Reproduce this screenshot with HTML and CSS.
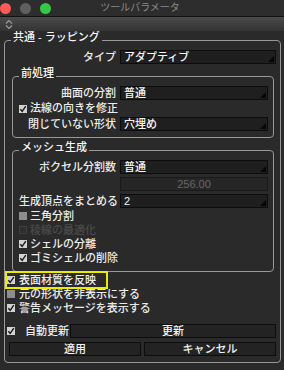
FILE: index.html
```html
<!DOCTYPE html>
<html lang="ja">
<head>
<meta charset="utf-8">
<title>ツールパラメータ</title>
<link rel="stylesheet" href="styles.css">
</head>
<body>
<div class="titlebar">
  <div class="lights"><span class="light red"></span><span class="light gray"></span><span class="light green"></span></div>
  <div class="title">ツールパラメータ</div>
  <div></div>
</div>
<div class="toolbar">
  <svg width="8" height="11" viewBox="0 0 8 11"><path d="M1 4.5 L4 1.5 L7 4.5 M1 6.5 L4 9.5 L7 6.5" fill="none" stroke="#9a9a9a" stroke-width="1.2"/></svg>
</div>
<fieldset class="group outer">
  <legend>共通 - ラッピング</legend>
  <div class="frow"><span class="lbl">タイプ</span><div class="select"><span>アダプティブ</span><svg class="tri" width="6" height="6" viewBox="0 0 6 6"><path d="M6 0 V6 H0 Z" fill="#060606"/></svg></div></div>

  <fieldset class="group inner pre">
    <legend>前処理</legend>
    <div class="frow"><span class="lbl">曲面の分割</span><div class="select"><span>普通</span><svg class="tri" width="6" height="6" viewBox="0 0 6 6"><path d="M6 0 V6 H0 Z" fill="#060606"/></svg></div></div>
    <div class="crow tall"><span class="cb on"><svg width="8" height="8" viewBox="0 0 8 8"><path d="M1.3 4.2 L3.2 6.3 L6.8 1.2" fill="none" stroke="#1a1a1a" stroke-width="1.4"/></svg></span><span>法線の向きを修正</span></div>
    <div class="frow"><span class="lbl">閉じていない形状</span><div class="select"><span>穴埋め</span><svg class="tri" width="6" height="6" viewBox="0 0 6 6"><path d="M6 0 V6 H0 Z" fill="#060606"/></svg></div></div>
  </fieldset>

  <fieldset class="group inner mesh">
    <legend>メッシュ生成</legend>
    <div class="frow"><span class="lbl">ボクセル分割数</span><div class="select"><span>普通</span><svg class="tri" width="6" height="6" viewBox="0 0 6 6"><path d="M6 0 V6 H0 Z" fill="#060606"/></svg></div></div>
    <div class="frow gap3"><span class="lbl"></span><div class="field">256.00</div></div>
    <div class="frow gap3"><span class="lbl">生成頂点をまとめる</span><div class="select"><span>2</span><svg class="tri" width="6" height="6" viewBox="0 0 6 6"><path d="M6 0 V6 H0 Z" fill="#060606"/></svg></div></div>
    <div class="checks">
      <div class="crow"><span class="cb off"></span><span>三角分割</span></div>
      <div class="crow dis"><span class="cb disabled"></span><span>稜線の最適化</span></div>
      <div class="crow"><span class="cb on"><svg width="8" height="8" viewBox="0 0 8 8"><path d="M1.3 4.2 L3.2 6.3 L6.8 1.2" fill="none" stroke="#1a1a1a" stroke-width="1.4"/></svg></span><span>シェルの分離</span></div>
      <div class="crow"><span class="cb on"><svg width="8" height="8" viewBox="0 0 8 8"><path d="M1.3 4.2 L3.2 6.3 L6.8 1.2" fill="none" stroke="#1a1a1a" stroke-width="1.4"/></svg></span><span>ゴミシェルの削除</span></div>
    </div>
  </fieldset>

  <div class="toplist">
    <div class="crow top hl"><span class="cb on"><svg width="8" height="8" viewBox="0 0 8 8"><path d="M1.3 4.2 L3.2 6.3 L6.8 1.2" fill="none" stroke="#1a1a1a" stroke-width="1.4"/></svg></span><span>表面材質を反映</span></div>
    <div class="crow top"><span class="cb off"></span><span>元の形状を非表示にする</span></div>
    <div class="crow top"><span class="cb on"><svg width="8" height="8" viewBox="0 0 8 8"><path d="M1.3 4.2 L3.2 6.3 L6.8 1.2" fill="none" stroke="#1a1a1a" stroke-width="1.4"/></svg></span><span>警告メッセージを表示する</span></div>
  </div>

  <div class="autorow">
    <span class="cb on"><svg width="8" height="8" viewBox="0 0 8 8"><path d="M1.3 4.2 L3.2 6.3 L6.8 1.2" fill="none" stroke="#1a1a1a" stroke-width="1.4"/></svg></span>
    <span class="autolbl">自動更新</span>
    <div class="btn">更新</div>
  </div>
  <div class="btnrow">
    <div class="btn">適用</div>
    <div class="btn">キャンセル</div>
  </div>
</fieldset>
</body>
</html>
```

FILE: styles.css
```css
* { box-sizing: border-box; }
html, body { margin: 0; padding: 0; }
body {
  width: 284px;
  height: 370px;
  overflow: hidden;
  background: #2a2a2a;
  font-family: "Liberation Sans", "Noto Sans CJK JP", sans-serif;
  font-size: 11px;
  font-weight: 500;
  color: #ececec;
}

.titlebar {
  height: 17px;
  display: grid;
  grid-template-columns: 1fr auto 1fr;
  align-items: center;
  background: #2d2d2d;
  border-bottom: 1px solid #111;
}
.lights { display: flex; gap: 9px; }
.light { width: 11px; height: 11px; border-radius: 50%; }
.red { background: #fc5b57; }
.gray { background: #5f5f5f; }
.green { background: #34c748; }
.title {
  font-size: 10px;
  font-weight: 400;
  line-height: 12px;
  color: #8a8a8a;
  margin-right: 4px;
}

.toolbar {
  height: 14px;
  background: linear-gradient(#4b4b4b, #333333);
  display: flex;
  align-items: center;
  padding-left: 5px;
}

.group {
  border: 1px solid #989898;
  border-radius: 4px;
  min-width: 0;
}
.group > legend {
  padding: 0 2px 6px;
  line-height: 13px;
  color: #f6f6f6;
}
.outer {
  margin: 0 0 0 4px;
  width: 277px;
  padding: 0 4px 6px 2px;
}
.outer > legend { margin-left: 4px; }
.inner {
  margin: 3px 2px 0 5px;
  padding: 0 5px 6px 6px;
}
.inner > legend { margin-left: 0; }

.frow {
  display: flex;
  align-items: center;
  gap: 4px;
  height: 14px;
}
.frow.gap3 { margin-top: 3px; }
.lbl {
  flex: none;
  width: 109px;
  text-align: right;
  line-height: 13px;
  white-space: nowrap;
}
.inner .lbl { width: 97px; }

.select, .field {
  flex: 1;
  height: 14px;
  border: 1px solid #0c0c0c;
  background: #1f1f1f;
  line-height: 12px;
}
.select {
  display: flex;
  justify-content: space-between;
  padding: 0 1px 1px 3px;
  color: #f6f6f6;
}
.select .tri { align-self: flex-end; }
.field {
  text-align: center;
  color: #676767;
  font-weight: 400;
  background: #262626;
  border-color: #191919;
}

.crow {
  display: flex;
  align-items: center;
  gap: 3px;
  height: 14px;
  line-height: 13px;
  white-space: nowrap;
}
.crow.tall { height: 15px; margin: 1px 0; }
.checks { margin-top: 1px; }
.crow.dis { color: #4a4a4a; }

.cb {
  flex: none;
  width: 8px;
  height: 8px;
  display: flex;
}
.cb.on { background: #d2d2d2; }
.cb.off { background: #8d8d8d; }
.cb.disabled { background: #2e2e2e; border: 1px solid #3e3e3e; }

.toplist { margin-top: 1px; }
.crow.top { gap: 4px; }
.hl {
  width: 99px;
  outline: 2px solid #ecec00;
}

.autorow {
  display: flex;
  align-items: center;
  height: 14px;
  margin-top: 9px;
}
.autolbl { margin-left: 10px; margin-right: 1px; line-height: 13px; }
.autorow .btn { flex: 1; }

.btnrow {
  display: flex;
  gap: 3px;
  margin: 4px 0 0 2px;
}
.btnrow .btn { flex: 1; }
.btn {
  height: 14px;
  border: 1px solid #0d0d0d;
  background: #232323;
  text-align: center;
  line-height: 12px;
  color: #f2f2f2;
}
```
